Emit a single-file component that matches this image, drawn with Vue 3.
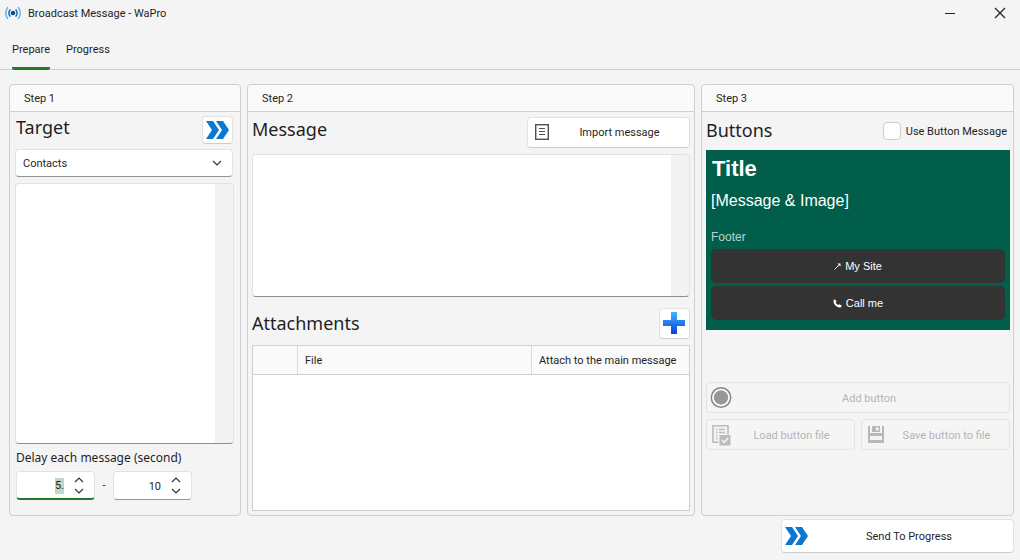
<script setup>
import { ref, onMounted } from 'vue'

const tabs = ['Prepare', 'Progress']
const activeTab = ref('Prepare')
const target = ref('Contacts')
const recipients = ref('')
const message = ref('')
const useButtons = ref(false)
const delayFrom = ref('5.')
const delayTo = ref('10')
const fromInput = ref(null)

function step(model, amount) {
  return String(Math.max(0, (parseInt(model, 10) || 0) + amount))
}

onMounted(() => {
  fromInput.value.focus()
  fromInput.value.select()
})
</script>

<template>
  <div class="window">
    <header class="titlebar">
      <svg class="app-icon" viewBox="0 0 16 14" width="16" height="14" fill="none" stroke-linecap="round">
        <circle cx="8" cy="7" r="2.3" fill="#0a4f8c" />
        <path d="M5 3.8Q2.800 7 5 10.200M11 3.800Q13.200 7 11 10.200" stroke="#1a6cae" stroke-width="1.500" />
        <path d="M2.500 1.600Q-1 7 2.500 12.400M13.500 1.600Q17 7 13.500 12.400" stroke="#55b0ea" stroke-width="1.400" />
      </svg>
      <h1 class="caption">Broadcast Message - WaPro</h1>
      <button class="win-btn" type="button" aria-label="Minimize">
        <svg viewBox="0 0 12 12" width="12" height="12"><path d="M1 6.500H11" stroke="#222" /></svg>
      </button>
      <button class="win-btn" type="button" aria-label="Close">
        <svg viewBox="0 0 12 12" width="12" height="12"><path d="M1 1L11 11M11 1L1 11" stroke="#222" stroke-width="1.200" /></svg>
      </button>
    </header>

    <nav class="tabs">
      <button
        v-for="tab in tabs"
        :key="tab"
        type="button"
        class="tab"
        :class="{ active: tab === activeTab }"
        @click="activeTab = tab"
      >{{ tab }}</button>
    </nav>

    <main class="steps">
      <section class="panel">
        <div class="panel-head">Step 1</div>
        <div class="panel-body target-body">
          <div class="heading-row target-row">
            <h2>Target</h2>
            <button class="btn square" type="button" aria-label="Load target">
              <svg viewBox="0 0 23 18" width="23" height="18" fill="#0a78d0">
                <path d="M0 0H7L13 9L7 18H0L6 9Z" /><path d="M10 0H17L23 9L17 18H10L16 9Z" />
              </svg>
            </button>
          </div>
          <div class="select-wrap">
            <select v-model="target" aria-label="Target">
              <option>Contacts</option>
              <option>Groups</option>
            </select>
            <svg class="chevron" viewBox="0 0 10 6" width="10" height="6" fill="none"><path d="M1 1L5 5L9 1" stroke="#333" stroke-width="1.200" /></svg>
          </div>
          <textarea v-model="recipients" class="area recipients" aria-label="Recipients"></textarea>
          <label class="delay-label" for="delay-from">Delay each message (second)</label>
          <div class="delays">
            <div class="spin">
              <input id="delay-from" ref="fromInput" v-model="delayFrom" type="text" />
              <span class="spin-btns">
                <button type="button" aria-label="Increase minimum delay" @click="delayFrom = step(delayFrom, 1)">
                  <svg viewBox="0 0 10 6" width="10" height="6" fill="none"><path d="M1 5L5 1L9 5" stroke="#333" stroke-width="1.200" /></svg>
                </button>
                <button type="button" aria-label="Decrease minimum delay" @click="delayFrom = step(delayFrom, -1)">
                  <svg viewBox="0 0 10 6" width="10" height="6" fill="none"><path d="M1 1L5 5L9 1" stroke="#333" stroke-width="1.200" /></svg>
                </button>
              </span>
            </div>
            <span class="dash">-</span>
            <div class="spin">
              <input v-model="delayTo" type="text" aria-label="Maximum delay" />
              <span class="spin-btns">
                <button type="button" aria-label="Increase maximum delay" @click="delayTo = step(delayTo, 1)">
                  <svg viewBox="0 0 10 6" width="10" height="6" fill="none"><path d="M1 5L5 1L9 5" stroke="#333" stroke-width="1.200" /></svg>
                </button>
                <button type="button" aria-label="Decrease maximum delay" @click="delayTo = step(delayTo, -1)">
                  <svg viewBox="0 0 10 6" width="10" height="6" fill="none"><path d="M1 1L5 5L9 1" stroke="#333" stroke-width="1.200" /></svg>
                </button>
              </span>
            </div>
          </div>
        </div>
      </section>

      <section class="panel">
        <div class="panel-head">Step 2</div>
        <div class="panel-body">
          <div class="heading-row">
            <h2>Message</h2>
            <button class="btn import" type="button">
              <svg viewBox="0 0 14 16" width="14" height="16" fill="none" stroke="#4a5354">
                <rect x="0.700" y="0.700" width="12.600" height="14.600" stroke-width="1.400" />
                <path d="M4 4.500H10M4 7.500H10M4 10.500H10" stroke-width="1.200" />
              </svg>
              <span>Import message</span>
            </button>
          </div>
          <textarea v-model="message" class="area message" aria-label="Message"></textarea>
          <div class="heading-row attach-row">
            <h2>Attachments</h2>
            <button class="btn square add" type="button" aria-label="Add attachment">
              <svg viewBox="0 0 22 22" width="22" height="22">
                <defs>
                  <linearGradient id="plus" x1="0" y1="0" x2="0" y2="1">
                    <stop offset="0" stop-color="#41b4ff" /><stop offset="1" stop-color="#0b3fd8" />
                  </linearGradient>
                </defs>
                <path d="M8 0H14V8H22V14H14V22H8V14H0V8H8Z" fill="url(#plus)" />
              </svg>
            </button>
          </div>
          <div class="table-box">
            <table>
              <colgroup><col class="c-icon" /><col /><col class="c-main" /></colgroup>
              <thead>
                <tr><th></th><th>File</th><th>Attach to the main message</th></tr>
              </thead>
              <tbody></tbody>
            </table>
          </div>
        </div>
      </section>

      <section class="panel">
        <div class="panel-head">Step 3</div>
        <div class="panel-body buttons-body">
          <div class="heading-row buttons-row">
            <h2>Buttons</h2>
            <label class="check"><input v-model="useButtons" type="checkbox" /><span>Use Button Message</span></label>
          </div>
          <div class="preview">
            <h3>Title</h3>
            <p class="preview-msg">[Message &amp; Image]</p>
            <p class="preview-footer">Footer</p>
            <button class="reply" type="button">
              <svg viewBox="0 0 7 7" width="7" height="7" fill="none" stroke="#fff"><path d="M0.500 6.500L5.500 1.500" /><path d="M3.500 0.500H6.500V3.500Z" fill="#fff" stroke="none" /></svg>
              My Site
            </button>
            <button class="reply" type="button">
              <svg viewBox="0 0 9 9" width="9" height="9" fill="#fff"><path d="M0.500 1.200Q1.500 0.200 2.300 0.600L3.500 2.600L2.600 3.600Q3.400 5.200 5.200 6L6.300 5.200L8.600 6.600Q8.700 8 7.300 8.500Q4.800 8.900 2.200 6.200Q0 3.600 0.500 1.200Z" /></svg>
              Call me
            </button>
          </div>
          <div class="file-actions">
            <button class="btn wide" type="button" disabled>
              <svg viewBox="0 0 22 22" width="22" height="22">
                <circle cx="11" cy="10.500" r="9.700" fill="#fff" stroke="#858585" stroke-width="1.500" />
                <circle cx="11" cy="10.500" r="7.200" fill="#989898" />
              </svg>
              <span>Add button</span>
            </button>
            <button class="btn" type="button" disabled>
              <svg viewBox="0 0 22 22" width="22" height="22" fill="none" stroke="#bcbcbc">
                <path d="M8.500 18.200H3V1.800H18V10.500" stroke-width="1.600" />
                <path d="M6 5.500H7.500M9 5.500H15M6 8.500H7.500M9 8.500H15M6 11.500H7.500M6 14.500H7.500" stroke-width="1.400" />
                <rect x="9.500" y="11" width="11" height="10.500" fill="#bcbcbc" stroke="none" />
                <path d="M12 16L14.300 18.300L18.200 14" stroke="#f4f4f4" stroke-width="1.500" />
              </svg>
              <span>Load button file</span>
            </button>
            <button class="btn" type="button" disabled>
              <svg viewBox="0 0 22 22" width="22" height="22" fill="#b8b8b8">
                <path fill-rule="evenodd" d="M3 2H5V9H17V2H19V19H3ZM5 12V16H17V12Z" />
                <path fill-rule="evenodd" d="M7 2H15V8H7ZM11 3.500V6.500H13.500V3.500Z" />
              </svg>
              <span>Save button to file</span>
            </button>
          </div>
        </div>
      </section>
    </main>

    <footer class="bottom">
      <button class="btn send" type="button">
        <svg viewBox="0 0 23 18" width="23" height="18" fill="#0a78d0">
          <path d="M0 0H7L13 9L7 18H0L6 9Z" /><path d="M10 0H17L23 9L17 18H10L16 9Z" />
        </svg>
        <span>Send To Progress</span>
      </button>
    </footer>
  </div>
</template>

<style>
body {
  margin: 0;
  background: #f4f4f4;
}
</style>

<style scoped>
.window {
  display: flex;
  flex-direction: column;
  min-height: 100vh;
  box-sizing: border-box;
  background: #f4f4f4;
  color: #1f1f1f;
  font: 11px/16px Tahoma, Roboto, "Noto Sans", sans-serif;
}
.window * { box-sizing: border-box; }
button, input, select, textarea { font: inherit; color: inherit; margin: 0; }
button { padding: 0; border: 0; background: none; }
svg { display: block; flex: none; }
h1, h2, h3, p { margin: 0; font-weight: 400; }

.titlebar { display: flex; align-items: center; height: 26px; padding-left: 5px; }
.caption { flex: 1; margin-left: 7px; padding-top: 2px; font-size: 11px; }
.win-btn { display: grid; place-items: center; width: 50px; height: 26px; }
.win-btn:last-child { width: 40px; margin-left: 5px; }

.tabs { display: flex; gap: 16px; height: 44px; padding-left: 12px; border-bottom: 1px solid #cfcfcf; }
.tab { height: 44px; padding-top: 7px; border-bottom: 3px solid transparent; border-radius: 2px; }
.tab.active { border-bottom-color: #217a2b; }

.steps {
  flex: 1;
  display: grid;
  grid-template-columns: 232fr 448fr 313fr;
  gap: 6px;
  padding: 14px 6px 0 9px;
}
.panel { display: flex; flex-direction: column; min-width: 0; border: 1px solid #cfcfcf; border-radius: 4px; }
.panel-head { height: 27px; padding: 6px 14px 4px; line-height: 16px; background: #fafafa; border-bottom: 1px solid #cfcfcf; border-radius: 4px 4px 0 0; }
.panel-body { flex: 1; display: flex; flex-direction: column; padding: 4px; }
.target-body { padding: 4px 6px 4px 5px; }
.buttons-body { padding-right: 3px; }
h2 { flex: 1; font-family: "Noto Sans", "Open Sans", sans-serif; font-size: 18px; line-height: 24px; padding-bottom: 6px; }
.heading-row { display: flex; align-items: center; height: 32px; margin: 0 0 6px; }
.target-row { height: 28px; margin: 0 0 5px; padding: 0 1px; }

.btn {
  display: flex;
  align-items: center;
  height: 31px;
  padding: 0 3px;
  background: #fff;
  border: 1px solid #e2e2e2;
  border-bottom-color: #cdcdcd;
  border-radius: 4px;
}
.btn span { flex: 1; padding-top: 2px; text-align: center; }
.btn:disabled { background: #f5f5f5; border-color: #e3e3e3; color: #b4b4b4; }
.square { width: 31px; justify-content: center; padding: 0; }
.add { padding-right: 1px; }
.target-row .square { height: 28px; }
.import { gap: 8px; width: 163px; padding: 0 7px; }

.select-wrap { position: relative; margin: 0 1px 6px 0; }
select {
  display: block;
  width: 100%;
  height: 28px;
  padding: 2px 7px 0;
  appearance: none;
  background: #fff;
  border: 1px solid #e2e2e2;
  border-bottom-color: #959595;
  border-radius: 4px;
}
.chevron { position: absolute; right: 11px; top: 11px; pointer-events: none; }
.area {
  display: block;
  width: 100%;
  padding: 6px;
  resize: none;
  outline: none;
  border: 1px solid #e2e2e2;
  border-bottom-color: #8f8f8f;
  border-radius: 4px;
  background: linear-gradient(#f3f3f3, #f3f3f3) right / 18px 100% no-repeat #fff;
}
.recipients { flex: 1; min-height: 120px; }
.delay-label { margin: 6px 0 5px 1px; font-family: "Noto Sans", "Open Sans", sans-serif; font-size: 12px; }
.delays { display: flex; align-items: center; margin: 0 0 11px 1px; }
.spin {
  display: flex;
  width: 79px;
  height: 29px;
  background: #fff;
  border: 1px solid #e2e2e2;
  border-bottom-color: #959595;
  border-radius: 4px;
}
.spin:focus-within { border-bottom: 2px solid #217a2b; }
.spin input { flex: 1; width: 0; padding: 2px 0 0; text-align: right; background: none; border: 0; outline: none; }
.spin input::selection { background: #bddbc4; color: #1f1f1f; }
.spin-btns { display: flex; flex-direction: column; justify-content: center; gap: 5px; padding: 0 10px; }
.dash { width: 18px; text-align: center; }

.message { height: 143px; }
.attach-row { margin: 10px 0 6px; }
.attach-row h2 { padding-bottom: 0; }
.table-box { flex: 1; min-height: 80px; background: #fff; border: 1px solid #cfcfcf; }
table { width: 100%; table-layout: fixed; border-collapse: separate; border-spacing: 0; }
.c-icon { width: 45px; }
.c-main { width: 157px; }
th {
  height: 29px;
  padding: 2px 7px 0;
  text-align: left;
  font-weight: 400;
  white-space: nowrap;
  background: #fafafa;
  border-right: 1px solid #dadada;
  border-bottom: 1px solid #cfcfcf;
}
th:last-child { border-right: 0; }

.buttons-row { height: 30px; margin: 0 0 4px; }
.buttons-row h2 { padding-bottom: 2px; }
.check { display: flex; align-items: center; gap: 5px; padding-right: 3px; }
.check span { padding-top: 2px; }
.check input { appearance: none; width: 18px; height: 18px; background: #fff; border: 1px solid #cdcdcd; border-radius: 4px; }
.preview { padding: 7px 5px 10px; background: #005e4b; color: #fff; font-family: "Liberation Sans", Arial, sans-serif; }
.preview h3 { padding-left: 1px; font-size: 22px; line-height: 24px; font-weight: 700; }
.preview-msg { margin-top: 10px; font-size: 16px; line-height: 20px; }
.preview-footer { margin: 18px 0 4px; font-size: 12px; line-height: 16px; color: #b9d3cc; }
.reply { display: flex; align-items: center; justify-content: center; gap: 4px; width: 100%; height: 34px; background: #333; border-radius: 5px; }
.reply + .reply { margin-top: 3px; }
.file-actions { display: grid; grid-template-columns: 1fr 1fr; gap: 6px; margin-top: 52px; }
.wide { grid-column: 1 / -1; }

.bottom { display: flex; justify-content: flex-end; padding: 3px 6px 7px; }
.send { width: 233px; height: 34px; }
</style>
